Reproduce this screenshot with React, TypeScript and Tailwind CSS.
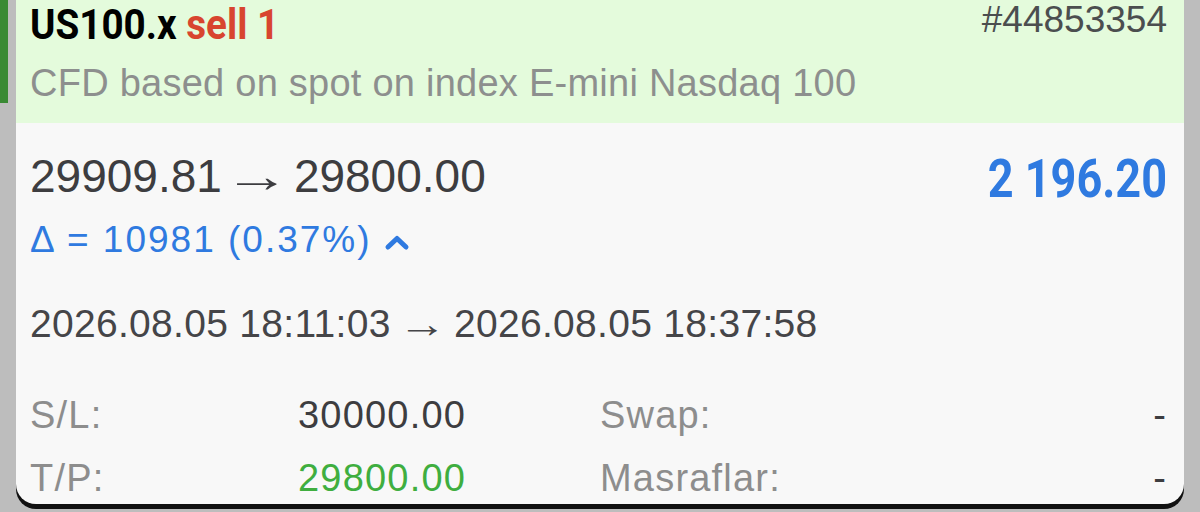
export default function App() {
  const sans = { fontFamily: '"Liberation Sans", Arial, sans-serif' };
  const cond = { fontFamily: 'Roboto, "Liberation Sans", sans-serif' };

  return (
    <div className="w-[1200px] h-[512px] bg-[#bdbdbd] flex overflow-hidden" style={sans}>
      <div className="w-[16px] shrink-0">
        <div className="w-[8px] h-[103px] bg-[#3a8a34]" />
      </div>
      <div className="flex-1 flex flex-col">
        <div className="flex-1 flex flex-col bg-[#f8f8f8] rounded-b-[20px] overflow-hidden shadow-[0_5px_0_#111]">
          {/* header */}
          <div className="h-[123px] shrink-0 bg-[#e4fbdc] pl-[14px] pr-[17px] pt-[1px]">
            <div className="flex justify-between items-start">
              <div
                className="h-[48px] text-[42px] leading-[48px] font-bold whitespace-nowrap origin-left scale-x-[0.92]"
                style={cond}
              >
                <span className="text-black">US100.x</span>{' '}
                <span className="text-[#d8452f]">sell 1</span>
              </div>
              <div className="text-[37px] leading-[38px] text-[#4b4e4f]">#44853354</div>
            </div>
            <div className="mt-[14px] text-[38px] leading-[40px] tracking-[0.25px] text-[#8d8f8e] whitespace-nowrap">
              CFD based on spot on index E-mini Nasdaq 100
            </div>
          </div>

          {/* body */}
          <div className="pl-[14px] pr-[17px] pt-[30px]">
            <div className="flex justify-between items-start">
              <div className="flex text-[46px] leading-[46px] text-[#3d3d40] whitespace-nowrap">
                <span>29909.81</span>
                <span className="inline-block scale-x-[1.45] ml-[12px] mr-[14px]">→</span>
                <span>29800.00</span>
              </div>
              <div
                className="text-[53px] leading-[53px] font-bold text-[#2f7ae0] whitespace-nowrap origin-right scale-x-[0.85]"
                style={cond}
              >
                2 196.20
              </div>
            </div>
            <div className="mt-[14px] flex items-center h-[40px] text-[37px] leading-[40px] tracking-[2px] text-[#2f7ae0]">
              <span className="whitespace-nowrap">Δ = 10981 (0.37%)</span>
              <svg width="26" height="18" viewBox="0 0 26 18" className="ml-[12px] mt-[4px]">
                <path d="M4 14 L13 5.5 L22 14" fill="none" stroke="#2f7ae0" strokeWidth="5" strokeLinecap="round" strokeLinejoin="round" />
              </svg>
            </div>
            <div className="mt-[44px] flex text-[39px] leading-[40px] tracking-[0.3px] text-[#454548] whitespace-nowrap">
              <span>2026.08.05 18:11:03</span>
              <span className="inline-block scale-x-[1.25] mx-[12px]">→</span>
              <span>2026.08.05 18:37:58</span>
            </div>

            <div className="mt-[40px] grid grid-cols-[268px_302px_1fr_auto] text-[38px] leading-[63px] tracking-[1.2px]">
              <div className="text-[#8d8d8d]">S/L:</div>
              <div className="text-[#3d3d40]">30000.00</div>
              <div className="text-[#8d8d8d]">Swap:</div>
              <div className="text-[#3d3d40] text-right">-</div>
              <div className="text-[#8d8d8d]">T/P:</div>
              <div className="text-[#3fae3f]">29800.00</div>
              <div className="text-[#8d8d8d]">Masraflar:</div>
              <div className="text-[#3d3d40] text-right">-</div>
            </div>
          </div>
        </div>
        <div className="h-[8px] shrink-0" />
      </div>
      <div className="w-[16px] shrink-0" />
    </div>
  );
}
